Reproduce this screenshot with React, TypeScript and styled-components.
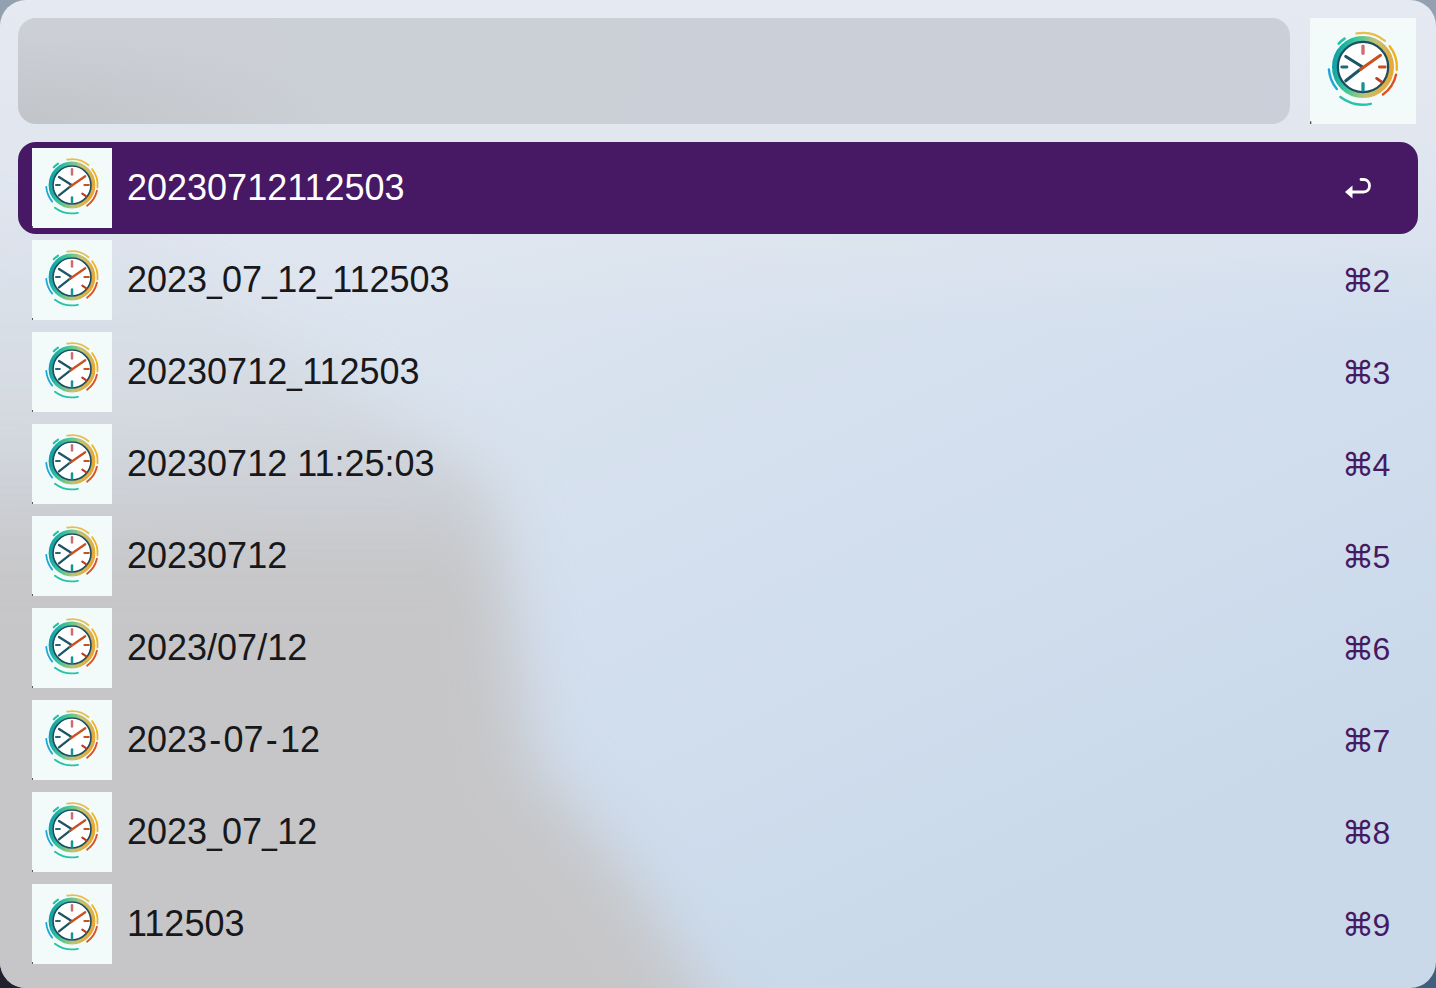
import React from "react";
import styled, {createGlobalStyle} from "styled-components";

const GlobalStyle = createGlobalStyle`
  html, body {
    margin: 0;
    padding: 0;
    width: 1436px;
    height: 988px;
    overflow: hidden;
    background:
      radial-gradient(circle at 0 100%, #22222e 0, #22222e 30px, transparent 42px),
      radial-gradient(circle at 100% 100%, #3f5f7c 0, #3f5f7c 30px, transparent 42px),
      #93a0af;
  }
`;

const Window = styled.div`
  position: relative;
  box-sizing: border-box;
  width: 1436px;
  height: 988px;
  padding: 18px;
  border-radius: 26px;
  overflow: hidden;
  font-family: "Liberation Sans", Arial, sans-serif;
  background:
    linear-gradient(180deg, #e5e9f1 0, #e2e7ef 120px, rgba(222, 230, 240, 0) 330px),
    linear-gradient(155deg, #dde5ef 25%, #d3dfee 55%, #c9d9ea 85%);
`;

const BlobLayer = styled.div`
  position: absolute;
  inset: 0;
  filter: blur(30px);
`;

const GrayBlob = styled.div`
  position: absolute;
  inset: 0 -120px -80px -120px;
  background: linear-gradient(180deg, rgba(198, 198, 200, 0) 180px, rgba(198, 198, 200, 0.35) 420px, #c6c6c8 570px);
  clip-path: polygon(0 180px, 280px 250px, 610px 480px, 635px 640px, 650px 760px, 750px 880px, 870px 1068px, 0 1068px);
`;

const Content = styled.div`
  position: relative;
  display: flex;
  flex-direction: column;
  gap: 18px;
`;

const SearchBar = styled.div`
  display: flex;
  gap: 20px;
  height: 106px;
  padding-right: 2px;
`;

const SearchInput = styled.div`
  flex: 1;
  border-radius: 18px;
  background:
    radial-gradient(ellipse 320px 90px at 0 100%, #c1c4c8, rgba(193, 196, 200, 0)),
    linear-gradient(100deg, #cccfd5 0, #cbcfd9 100%);
`;

const ResultList = styled.ul`
  list-style: none;
  margin: 0;
  padding: 0;
`;

const ResultRow = styled.li<{ $selected?: boolean }>`
  display: flex;
  align-items: center;
  height: 92px;
  padding-left: 14px;
  border-radius: 18px;
  background: ${props => (props.$selected ? "#471863" : "transparent")};
  color: ${props => (props.$selected ? "#ffffff" : "#18181a")};
`;

const IconTile = styled.div<{ $size: number }>`
  flex: none;
  width: ${props => props.$size}px;
  height: ${props => props.$size}px;
  background: #f2fafa;
`;

const Title = styled.span`
  flex: 1;
  margin-left: 15px;
  font-size: 36px;
  line-height: 44px;
  white-space: pre;
`;

// the separators are narrower (_) and wider (-) than Liberation draws them
const Underscore = styled.span`
  display: inline-block;
  width: 15px;
  transform: scaleX(0.75);
  transform-origin: left;
`;

const Hyphen = styled.span`
  margin: 0 2.2px;
`;

const Shortcut = styled.span`
  flex: none;
  width: 74px;
  display: flex;
  align-items: center;
  padding-top: 2px;
  font-family: "Liberation Sans", "DejaVu Sans", sans-serif;
  font-size: 32px;
  line-height: 44px;
  color: #451a63;
`;

const ShortcutKeys = styled.span`
  margin-left: -2px;
  letter-spacing: -1.6px;
  white-space: pre;
`;

const ReturnIcon = styled.svg`
  display: block;
  margin-top: -2px;
`;

const rows = [
  "20230712112503",
  "2023_07_12_112503",
  "20230712_112503",
  "20230712 11:25:03",
  "20230712",
  "2023/07/12",
  "2023-07-12",
  "2023_07_12",
  "112503",
];

function renderTitle(title: string) {
  return title.split(/([_-])/).map((part, i) => {
    if (part === "_") return <Underscore key={i}>_</Underscore>;
    if (part === "-") return <Hyphen key={i}>-</Hyphen>;
    return part;
  });
}

// arc around the clock centre, angles in degrees clockwise from 12 o'clock
function arc(radius: number, from: number, to: number): string {
  const point = (deg: number) => {
    const rad = (deg * Math.PI) / 180;
    return `${(40 + radius * Math.sin(rad)).toFixed(2)} ${(37 - radius * Math.cos(rad)).toFixed(2)}`;
  };
  return `M${point(from)} A${radius} ${radius} 0 ${to - from > 180 ? 1 : 0} 1 ${point(to)}`;
}

function ClockIcon({size}: { size: number }): JSX.Element {
  return <IconTile $size={size}>
    <svg width={size} height={size} viewBox="0 0 80 80" fill="none" strokeLinecap="round">
      <defs>
        <linearGradient id="clockRing" x1="0" y1="0.4" x2="1" y2="0.6">
          <stop offset="0" stopColor="#12a3a6"/>
          <stop offset="0.28" stopColor="#38c79c"/>
          <stop offset="0.62" stopColor="#c2c274"/>
          <stop offset="1" stopColor="#e9a836"/>
        </linearGradient>
      </defs>
      <path d={arc(25.8, -11, 40)} stroke="#e8bd4d" strokeWidth="1.7"/>
      <path d={arc(25.6, 52, 95)} stroke="#efb21e" strokeWidth="1.8"/>
      <path d={arc(25.6, 103, 144)} stroke="#dc4f1f" strokeWidth="1.8"/>
      <path d={arc(28.4, 168, 217)} stroke="#25c3a8" strokeWidth="1.8"/>
      <path d={arc(25.8, 230, 266)} stroke="#1da6d8" strokeWidth="1.8"/>
      <path d={arc(25.5, 314, 327)} stroke="#25c4a5" strokeWidth="2"/>
      <circle cx="40" cy="37" r="21.4" stroke="url(#clockRing)" strokeWidth="4"/>
      <circle cx="40" cy="37" r="19" fill="#ffffff" stroke="#1b4f5f" strokeWidth="1.7"/>
      <path d="M40 21.2V26.6" stroke="#cf6c72" strokeWidth="2.5"/>
      <path d="M40 49.5V54.3" stroke="#14929a" strokeWidth="2.5"/>
      <path d="M24 37H27.8" stroke="#1b6b78" strokeWidth="2.2"/>
      <path d="M52.4 37H56.8" stroke="#c9501f" strokeWidth="2.2"/>
      <path d="M50.3 45.6L54 48.2" stroke="#b8402a" strokeWidth="2.2"/>
      <path d="M27 29L40 37.2L27 47.4" stroke="#1b5566" strokeWidth="2.3" strokeLinejoin="round"/>
      <path d="M38 38.8L53.2 28.2" stroke="#c9501f" strokeWidth="2.3"/>
      <path d="M0.5 78V80" stroke="#555555" strokeWidth="1" strokeLinecap="butt"/>
    </svg>
  </IconTile>;
}

export default function App(): JSX.Element {
  return <Window>
    <GlobalStyle/>
    <BlobLayer>
      <GrayBlob/>
    </BlobLayer>
    <Content>
      <SearchBar>
        <SearchInput/>
        <ClockIcon size={106}/>
      </SearchBar>
      <ResultList>
        {rows.map((title, index) => <ResultRow key={title} $selected={index === 0}>
          <ClockIcon size={80}/>
          <Title>{renderTitle(title)}</Title>
          <Shortcut>
            {index === 0
              ? <ReturnIcon width="28" height="24" viewBox="0 0 28 24" fill="none">
                <path d="M17 3.5H19.5C23 3.5 25.5 6 25.5 9.8C25.5 13.5 23 16 19.5 16H7" stroke="#ffffff" strokeWidth="2.8" strokeLinecap="round"/>
                <path d="M1 16L8.5 9.5V22.5Z" fill="#ffffff"/>
              </ReturnIcon>
              : <ShortcutKeys>{`⌘${index + 1}`}</ShortcutKeys>}
          </Shortcut>
        </ResultRow>)}
      </ResultList>
    </Content>
  </Window>;
}
